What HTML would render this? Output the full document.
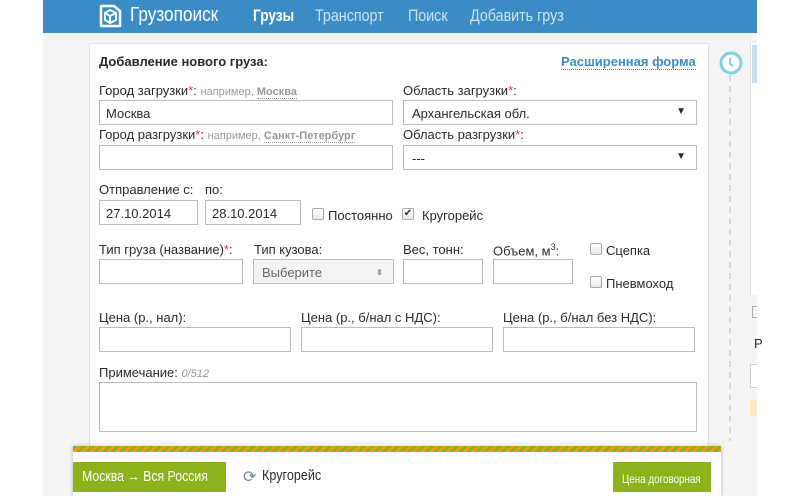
<!DOCTYPE html>
<html><head><meta charset="utf-8"><style>
*{margin:0;padding:0;box-sizing:border-box}
html,body{width:800px;height:496px;overflow:hidden}
body{background:#fff;font-family:"Liberation Sans",Arial,sans-serif;font-size:13px;color:#2a2a2a;position:relative}
.a{position:absolute}
.n{display:inline-block;transform:scaleX(.84);transform-origin:0 0;white-space:nowrap}
.bg{left:43px;top:0;width:714px;height:496px;background:#f4f4f4}
.hdr{left:43px;top:0;width:714px;height:33px;background:#3b8cc4}
.nav{top:6px;font-size:17px;color:#cfe4f3}
.card{left:89px;top:43px;width:620px;height:420px;background:#fff;border:1px solid #e2e2e2}
.lbl{font-size:13px;white-space:nowrap}
.lbl i{font-style:normal;color:#e33}
.hint{font-size:11px;color:#999}
.hint u{text-decoration:none;border-bottom:1px dotted #999;font-weight:bold}
.in{background:#fff;border:1px solid #bcbcbc;height:25px;padding:5px 6px;font-size:13px}
.sel{background:#fff;border:1px solid #bcbcbc;height:25px;padding:5px 8px;font-size:13px}
.sel b{position:absolute;right:10px;top:5px;font-size:10px}
.cb{width:12px;height:12px;border:1px solid #aaa;border-radius:2px;background:linear-gradient(#fff,#e8e8e8)}
</style></head><body>
<div class="a bg"></div>
<div class="a hdr"></div>
<svg class="a" style="left:96px;top:3px" width="28" height="26" viewBox="0 0 28 26"><path d="M5 3h13l6 5v15H5z" fill="none" stroke="#fff" stroke-width="2.5" stroke-linejoin="round"/><path d="M9 10l5-3 6 3v7l-6 3-5-3z" fill="none" stroke="#fff" stroke-width="2"/><path d="M9 10l5 3 6-3M14 13v7" stroke="#fff" stroke-width="2" fill="none"/></svg>
<div class="a" style="left:130px;top:4px;font-size:20px;color:#fff"><span class="n" style="transform:scaleX(.86)">Грузопоиск</span></div>
<div class="a nav" style="left:253px;color:#fff;font-weight:bold"><span class="n" style="transform:scaleX(.8)">Грузы</span></div>
<div class="a nav" style="left:315px"><span class="n">Транспорт</span></div>
<div class="a nav" style="left:408px"><span class="n">Поиск</span></div>
<div class="a nav" style="left:470px"><span class="n">Добавить груз</span></div>

<div class="a card"></div>
<div class="a" style="left:99px;top:54px;font-weight:bold;font-size:13px">Добавление нового груза:</div>
<div class="a" style="left:561px;top:54px;color:#3b8cc4;font-weight:bold;border-bottom:1px dotted #3b8cc4">Расширенная форма</div>

<div class="a lbl" style="left:99px;top:83px">Город загрузки<i>*</i>: <span class="hint">например, <u>Москва</u></span></div>
<div class="a in" style="left:99px;top:100px;width:294px">Москва</div>
<div class="a lbl" style="left:403px;top:83px">Область загрузки<i>*</i>:</div>
<div class="a sel" style="left:403px;top:100px;width:294px">Архангельская обл.<b>▼</b></div>

<div class="a lbl" style="left:99px;top:127px">Город разгрузки<i>*</i>: <span class="hint">например, <u>Санкт-Петербург</u></span></div>
<div class="a in" style="left:99px;top:145px;width:294px"></div>
<div class="a lbl" style="left:403px;top:127px">Область разгрузки<i>*</i>:</div>
<div class="a sel" style="left:403px;top:145px;width:294px">---<b>▼</b></div>

<div class="a lbl" style="left:99px;top:182px">Отправление с:</div>
<div class="a lbl" style="left:205px;top:182px">по:</div>
<div class="a in" style="left:99px;top:200px;width:99px">27.10.2014</div>
<div class="a in" style="left:205px;top:200px;width:96px">28.10.2014</div>
<div class="a cb" style="left:312px;top:208px"></div>
<div class="a lbl" style="left:328px;top:208px">Постоянно</div>
<div class="a cb" style="left:402px;top:208px;font-size:10px;line-height:10px;text-align:center">✔</div>
<div class="a lbl" style="left:422px;top:208px">Кругорейс</div>

<div class="a lbl" style="left:99px;top:242px">Тип груза (название)<i>*</i>:</div>
<div class="a in" style="left:99px;top:259px;width:144px"></div>
<div class="a lbl" style="left:254px;top:242px">Тип кузова:</div>
<div class="a sel" style="left:253px;top:259px;width:141px;color:#666;background:#f4f4f4">Выберите<b style="font-size:8px;top:8px;color:#999">⬍</b></div>
<div class="a lbl" style="left:403px;top:242px">Вес, тонн:</div>
<div class="a in" style="left:403px;top:259px;width:80px"></div>
<div class="a lbl" style="left:493px;top:242px">Объем, м<sup style="font-size:9px">3</sup>:</div>
<div class="a in" style="left:493px;top:259px;width:80px"></div>
<div class="a cb" style="left:590px;top:243px"></div>
<div class="a lbl" style="left:606px;top:243px">Сцепка</div>
<div class="a cb" style="left:590px;top:276px"></div>
<div class="a lbl" style="left:606px;top:276px">Пневмоход</div>

<div class="a lbl" style="left:99px;top:310px">Цена (р., нал):</div>
<div class="a lbl" style="left:301px;top:310px">Цена (р., б/нал с НДС):</div>
<div class="a lbl" style="left:503px;top:310px">Цена (р., б/нал без НДС):</div>
<div class="a in" style="left:99px;top:327px;width:192px"></div>
<div class="a in" style="left:301px;top:327px;width:192px"></div>
<div class="a in" style="left:503px;top:327px;width:192px"></div>

<div class="a lbl" style="left:99px;top:365px">Примечание: <span class="hint" style="font-style:italic">0/512</span></div>
<div class="a in" style="left:99px;top:382px;width:598px;height:50px"></div>

<svg class="a" style="left:718px;top:51px" width="26" height="390"><circle cx="13" cy="12" r="10" fill="#fff" stroke="#7fd0dc" stroke-width="3"/><path d="M12 7v6l3 2" stroke="#7fd0dc" stroke-width="2" fill="none"/><line x1="12" y1="24" x2="12" y2="390" stroke="#c5dde4" stroke-width="2" stroke-dasharray="6 5"/></svg>
<div class="a" style="left:750px;top:43px;width:7px;height:252px;background:#fff;border-left:1px solid #ddd"></div>
<div class="a" style="left:752px;top:45px;width:5px;height:38px;background:#ccdde9"></div>
<div class="a" style="left:752px;top:306px;width:5px;height:12px;border:1px solid #aaa;border-right:none"></div>
<div class="a" style="left:754px;top:336px;font-size:13px">Р</div>
<div class="a" style="left:750px;top:364px;width:7px;height:24px;background:#fff;border:1px solid #ccc;border-right:none"></div>
<div class="a" style="left:750px;top:400px;width:7px;height:16px;background:#fbe8c4"></div>

<div class="a" style="left:73px;top:446px;width:648px;height:50px;background:#fff;box-shadow:0 0 4px rgba(0,0,0,.25)"></div>
<div class="a" style="left:73px;top:446px;width:648px;height:6px;background:repeating-linear-gradient(-45deg,#f29a1c 0 3px,#8cb31c 3px 6px)"></div>
<div class="a" style="left:73px;top:462px;width:153px;height:30px;background:#8cb31c;color:#fff;font-size:15px;padding:6px 0 0 9px"><span class="n" style="transform:scaleX(.82)">Москва → Вся Россия</span></div>
<div class="a" style="left:243px;top:467px;font-size:16px;color:#6b8a97">⟳</div>
<div class="a" style="left:262px;top:467px;font-size:15px"><span class="n">Кругорейс</span></div>
<div class="a" style="left:613px;top:462px;width:98px;height:30px;background:#8cb31c;color:#fff;font-size:12px;padding:10px 0 0 9px"><span class="n" style="transform:scaleX(.82)">Цена договорная</span></div>
</body></html>
